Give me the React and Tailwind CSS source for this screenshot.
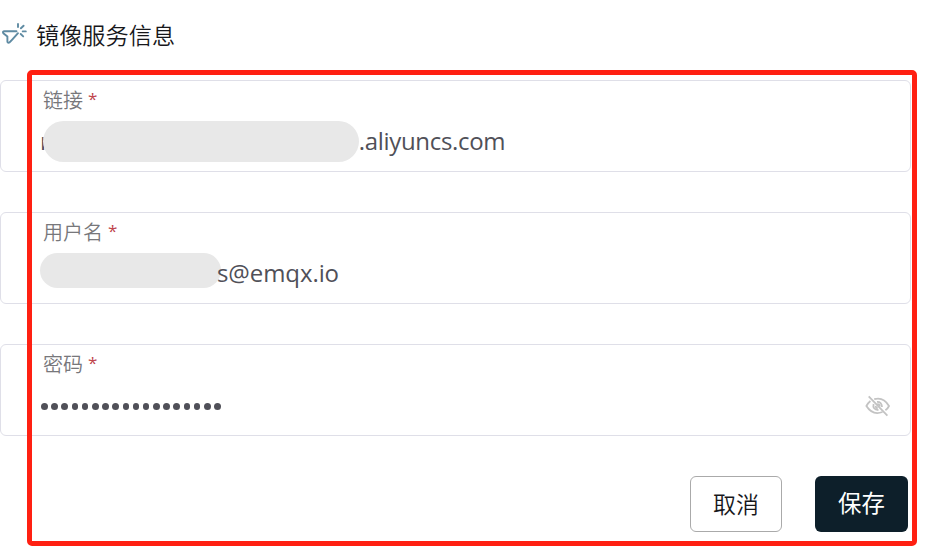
import React from "react";

function AnnounceIcon() {
  return (
    <svg className="h-[26px] w-[28px] shrink-0" viewBox="0 0 28 26" fill="none" stroke="#5f8ba3" strokeWidth="1.9" strokeLinecap="round" strokeLinejoin="round">
      <path d="M16.5 10.3 L4.5 10.3 Q2.2 10.5 3.3 12.2 L7.4 15.6 L7.4 20.6 Q7.7 22.4 9.6 21.4 Q11 20.2 18 12.2" />
      <path d="M18 3V6M23.6 4.7L20.9 7.3M22.7 10.4H25.8M20.7 13L23.2 15.4" />
    </svg>
  );
}

function EyeOffIcon() {
  return (
    <svg className="h-[24px] w-[26px]" viewBox="0 0 26 24" fill="none" stroke="#c3c3c3" strokeWidth="1.8">
      <path d="M9.2 5.2Q18.5 2.6 24 12Q22.7 14.7 20.4 16.3M5.4 7Q3.2 8.8 1.4 12Q7.6 21.8 17.5 18" />
      <path d="M12 7.9Q16.7 7.6 17 13M8.6 10.1Q7.2 15.3 13.5 16.2" />
      <path d="M12.2 10.3Q14.7 10 14.8 12.5M10.6 11.8Q10.8 14 12.8 14.2" />
      <path d="M3.7 2.3L22.4 21.6" />
    </svg>
  );
}

function Field({ label, children }) {
  return (
    <div className="h-[92px] w-[911px] rounded-[6px] border border-[#dfdfe8] pl-[41px] pr-[19px]">
      <div className="flex h-[38px] items-center pl-px text-[20px] font-[350] text-[#77777b]">
        <span>{label}</span>
        <span className="mb-[3px] ml-[5px] font-['Open_Sans','Noto_Sans',sans-serif] text-[17px] font-normal text-[#c0454c]">*</span>
      </div>
      <div className="flex h-[44px] items-center font-['Open_Sans','Noto_Sans',sans-serif] text-[24px] text-[#505058]">
        {children}
      </div>
    </div>
  );
}

export default function App() {
  return (
    <div className="relative h-[557px] w-[948px] overflow-hidden bg-white pt-[18px] font-['Noto_Sans_CJK_SC',sans-serif]">
      <div className="flex h-[32px] items-center">
        <AnnounceIcon />
        <h2 className="ml-[8px] text-[23.2px] font-[350] text-[#17171b]">镜像服务信息</h2>
      </div>
      <div className="mt-[30px] flex flex-col gap-[40px]">
        <Field label="链接">
          <span className="-ml-[2px] -mr-[7px]">r</span>
          <span className="relative mt-px h-[41px] w-[316px] shrink-0 rounded-full bg-[#e8e8e8]" />
          <span className="tracking-[-0.33px]">.aliyuncs.com</span>
        </Field>
        <Field label="用户名">
          <span className="mb-[6px] -ml-[2px] h-[35px] w-[181px] shrink-0 rounded-full bg-[#e8e8e8]" />
          <span className="-ml-[4px] tracking-[-0.08px]">s@emqx.io</span>
        </Field>
        <Field label="密码">
          <span className="-ml-px flex gap-[3.6px] pt-[3px]">
            {Array.from({ length: 18 }, (_, i) => (
              <span key={i} className="size-[6.6px] rounded-full bg-[#505058]" />
            ))}
          </span>
          <span className="ml-auto pt-[2px]"><EyeOffIcon /></span>
        </Field>
      </div>
      <div className="mt-[40px] flex w-[908px] justify-end gap-[33px]">
        <button className="h-[56px] w-[92px] rounded-[6px] border border-[#aaaaaa] pb-[2px] text-[23px] font-[350] text-[#17171b]">取消</button>
        <button className="h-[56px] w-[93px] rounded-[6px] bg-[#0d1f2a] pb-[2px] text-[23.4px] font-normal text-white">保存</button>
      </div>
      <div className="pointer-events-none absolute left-[27px] top-[70px] h-[476px] w-[890px] rounded-[5px] border-[5px] border-[#ff2012]" />
    </div>
  );
}
